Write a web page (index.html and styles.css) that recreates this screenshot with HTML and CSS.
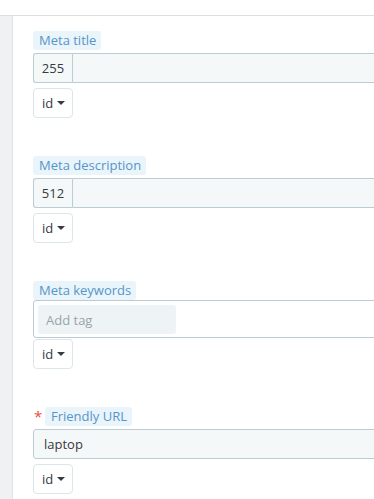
FILE: index.html
```html
<!DOCTYPE html>
<html lang="en">
<head>
    <meta charset="UTF-8">
    <title>SEO</title>
    <link rel="stylesheet" href="styles.css">
</head>
<body>
    <div class="topbar"></div>
    <div class="layout">
        <div class="sidebar"></div>
        <div class="panel">

            <!-- Meta title -->
            <div class="form-group">
                <div class="label-row"><span class="field-label">Meta title</span></div>
                <div class="input-group">
                    <span class="addon">255</span>
                    <input class="form-control" type="text">
                </div>
                <button class="lang-btn">id <span class="caret"></span></button>
            </div>

            <!-- Meta description -->
            <div class="form-group">
                <div class="label-row"><span class="field-label">Meta description</span></div>
                <div class="input-group">
                    <span class="addon">512</span>
                    <input class="form-control" type="text">
                </div>
                <button class="lang-btn">id <span class="caret"></span></button>
            </div>

            <!-- Meta keywords -->
            <div class="form-group">
                <div class="label-row tight"><span class="field-label">Meta keywords</span></div>
                <div class="tag-input">
                    <span class="tag-field">Add tag</span>
                </div>
                <button class="lang-btn close">id <span class="caret"></span></button>
            </div>

            <!-- Friendly URL -->
            <div class="form-group">
                <div class="label-row"><span class="required">*</span><span class="field-label">Friendly URL</span></div>
                <div class="input-group">
                    <input class="form-control" type="text" value="laptop">
                </div>
                <button class="lang-btn">id <span class="caret"></span></button>
            </div>

        </div>
    </div>
</body>
</html>
```

FILE: styles.css
```css
html, body {
    margin: 0;
    height: 100%;
    overflow: hidden;
}
body {
    font-family: "Open Sans", sans-serif;
    font-size: 13px;
    color: #363a41;
    background: #fff;
}
.topbar {
    height: 15px;
    border-bottom: 1px solid #dfdfdf;
}
.layout {
    display: flex;
    height: 100%;
}
.sidebar {
    width: 12px;
    flex: none;
    background: #eff1f2;
    border-right: 1px solid #dfe3e5;
}
.panel {
    flex: none;
    width: 500px;
    padding: 15px 0 0 20px;
}
.form-group {
    margin-bottom: 38px;
}
.label-row {
    display: flex;
    align-items: center;
    height: 19px;
    margin-bottom: 3px;
}
.label-row.tight {
    margin-bottom: 0;
}
.field-label {
    display: inline-block;
    height: 19px;
    line-height: 19px;
    padding: 0 5px 0 6px;
    border-radius: 3px;
    background: #eaf4fb;
    color: #5596c9;
}
.required {
    color: #f04b3e;
    font-size: 15px;
    width: 11px;
    margin-left: 1px;
    line-height: 19px;
}
.input-group {
    display: flex;
    height: 30px;
}
.addon {
    width: 38px;
    flex: none;
    display: flex;
    align-items: center;
    justify-content: center;
    background: #f5f8f9;
    border: 1px solid #bbcdd2;
    border-right: none;
    border-radius: 3px 0 0 3px;
}
.form-control {
    flex: 1;
    box-sizing: border-box;
    height: 30px;
    margin: 0;
    padding: 0 10px;
    font: inherit;
    color: #363a41;
    background: #f5f8f9;
    border: 1px solid #bbcdd2;
    border-radius: 0 3px 3px 0;
    outline: none;
}
.input-group .form-control:only-child {
    border-radius: 3px;
}
.tag-input {
    box-sizing: border-box;
    height: 38px;
    padding: 4px;
    background: #fff;
    border: 1px solid #bbcdd2;
    border-radius: 3px;
}
.tag-field {
    display: flex;
    align-items: center;
    width: 130px;
    height: 29px;
    padding-left: 8px;
    border-radius: 3px;
    background: #eef3f5;
    color: #9ba3a8;
}
.lang-btn {
    display: flex;
    align-items: center;
    gap: 4px;
    box-sizing: border-box;
    width: 40px;
    height: 30px;
    margin-top: 5px;
    padding: 0 0 0 8px;
    font: inherit;
    color: #363a41;
    background: #fff;
    border: 1px solid #dbe6e9;
    border-radius: 4px;
}
.lang-btn.close {
    margin-top: 1px;
}
.caret {
    width: 0;
    height: 0;
    border-left: 4px solid transparent;
    border-right: 4px solid transparent;
    border-top: 4px solid #363a41;
}
```
